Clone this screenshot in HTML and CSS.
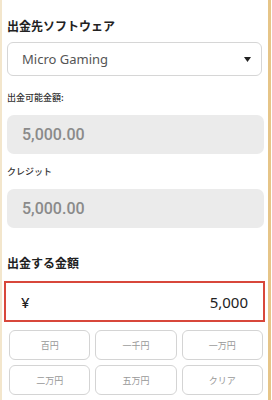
FILE: index.html
```html
<!DOCTYPE html>
<html lang="ja">
<head>
<meta charset="utf-8">
<link rel="stylesheet" href="styles.css">
</head>
<body>
<div class="frame">
  <h2 class="title">出金先ソフトウェア</h2>
  <div class="select">
    <span>Micro Gaming</span>
    <svg class="caret" width="7" height="5" viewBox="0 0 7 5"><path d="M0 0H7L3.5 5Z" fill="#222"/></svg>
  </div>
  <div class="label lbl1">出金可能金額:</div>
  <div class="readonly">5,000.00</div>
  <div class="label lbl2">クレジット</div>
  <div class="readonly">5,000.00</div>
  <h2 class="title title2">出金する金額</h2>
  <div class="amount">
    <span class="yen">¥</span>
    <span class="val">5,000</span>
  </div>
  <div class="grid">
    <div class="btn">百円</div>
    <div class="btn">一千円</div>
    <div class="btn">一万円</div>
    <div class="btn">二万円</div>
    <div class="btn">五万円</div>
    <div class="btn">クリア</div>
  </div>
</div>
</body>
</html>
```

FILE: styles.css
```css
html, body {
  margin: 0;
  padding: 0;
  background: #fff;
}
body {
  font-family: "Noto Sans", "Noto Sans CJK JP", sans-serif;
  color: #222;
  width: 272px;
  height: 400px;
  overflow: hidden;
}
.frame {
  box-sizing: border-box;
  width: 271px;
  height: 400px;
  border-left: 2px solid #f3e6cc;
  border-right: 3px solid #e6c588;
  padding: 0 4px 0 5px;
}
.title {
  margin: 0;
  padding-top: 18px;
  font-size: 12px;
  line-height: 16px;
  font-weight: 700;
  color: #222;
  font-family: "Noto Sans CJK JP", sans-serif;
}
.select {
  margin-top: 8px;
  margin-right: 2px;
  height: 34px;
  box-sizing: border-box;
  border: 1px solid #d6d6d6;
  border-radius: 6px;
  display: flex;
  align-items: center;
  justify-content: space-between;
  padding: 0 10px 0 14px;
  font-size: 13px;
  color: #555;
}
.caret { display: block; }
.label {
  font-size: 9px;
  line-height: 12px;
  color: #333;
  font-weight: 500;
  font-family: "Noto Sans CJK JP", sans-serif;
}
.lbl1 { margin-top: 16px; }
.lbl2 { margin-top: 12px; }
.readonly {
  margin-top: 11px;
  height: 39px;
  background: #ebebeb;
  border-radius: 7px;
  display: flex;
  align-items: center;
  padding-left: 15px;
  font-size: 16px;
  font-weight: 500;
  color: #8a8a8a;
  font-family: "Roboto", sans-serif;
}
.title2 { padding-top: 27px; }
.amount {
  margin: 10px -1px 0 -3px;
  height: 41px;
  box-sizing: border-box;
  border: 2px solid #d8473b;
  display: flex;
  align-items: center;
  justify-content: space-between;
  padding: 0 15px 0 15px;
  font-size: 15px;
  color: #222;
}
.yen { font-weight: 500; }
.grid {
  margin: 8px 1px 0 2px;
  display: grid;
  grid-template-columns: repeat(3, 1fr);
  gap: 5px 5px;
}
.btn {
  height: 30px;
  box-sizing: border-box;
  border: 1px solid #d4d4d4;
  border-radius: 6px;
  display: flex;
  align-items: center;
  justify-content: center;
  font-size: 9px;
  color: #999;
  font-family: "Noto Sans CJK JP", sans-serif;
}
```
